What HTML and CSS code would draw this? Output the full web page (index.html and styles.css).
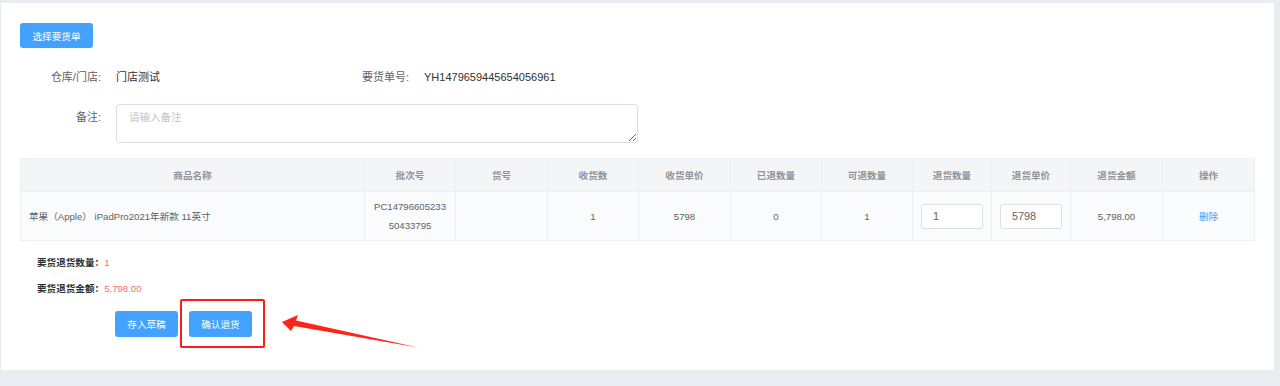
FILE: index.html
```html
<!DOCTYPE html>
<html lang="zh-CN">
<head>
  <meta charset="UTF-8" />
  <title>要货退货</title>
  <link rel="stylesheet" href="styles.css">
</head>
<body>
  <div class="card">
    <button class="btn btn-select">选择要货单</button>

    <div class="info-row">
      <div class="form-item">
        <span class="label">仓库/门店:</span>
        <span class="value">门店测试</span>
      </div>
      <div class="form-item">
        <span class="label">要货单号:</span>
        <span class="value">YH1479659445654056961</span>
      </div>
    </div>

    <div class="remark-row">
      <span class="label">备注:</span>
      <textarea class="remark" placeholder="请输入备注"></textarea>
    </div>

    <table class="goods">
      <colgroup>
        <col style="width:344px"><col style="width:91px"><col style="width:92px"><col style="width:91px">
        <col style="width:92px"><col style="width:91px"><col style="width:91px"><col style="width:79px">
        <col style="width:79px"><col style="width:92px"><col style="width:92px">
      </colgroup>
      <thead>
        <tr>
          <th>商品名称</th><th>批次号</th><th>货号</th><th>收货数</th><th>收货单价</th><th>已退数量</th>
          <th>可退数量</th><th>退货数量</th><th>退货单价</th><th>退货金额</th><th>操作</th>
        </tr>
      </thead>
      <tbody>
        <tr>
          <td class="name">苹果（Apple） iPadPro2021年新款 11英寸</td>
          <td>PC14796605233<br>50433795</td>
          <td></td>
          <td>1</td>
          <td>5798</td>
          <td>0</td>
          <td>1</td>
          <td><input class="cell-input" value="1"></td>
          <td><input class="cell-input" value="5798"></td>
          <td>5,798.00</td>
          <td><a class="link" href="#">删除</a></td>
        </tr>
      </tbody>
    </table>

    <div class="summary">
      <div class="sum-line"><span class="sum-label">要货退货数量：</span><span class="sum-value">1</span></div>
      <div class="sum-line"><span class="sum-label">要货退货金额：</span><span class="sum-value">5,798.00</span></div>
    </div>

    <div class="actions">
      <button class="btn">存入草稿</button>
      <button class="btn">确认退货</button>
    </div>

    <div class="highlight"></div>
    <svg class="arrow" width="155" height="45" viewBox="0 0 155 45">
      <polygon points="12,12 28,5 26,10.5 148,37.5 24,16 21,21" fill="#ff2318" />
    </svg>
  </div>
</body>
</html>
```

FILE: styles.css
```css
body {
  margin: 0;
  padding: 3px 6px 0 1px;
  background: #e9edf2;
  font-family: "Liberation Sans", "Noto Sans CJK SC", sans-serif;
  height: 383px;
}
.card {
  position: relative;
  background: #fff;
  width: 1273px;
  height: 367px;
  box-sizing: border-box;
  padding: 20px 0 0 19px;
}
.btn {
  display: block;
  height: 26px;
  width: 63px;
  padding: 0;
  border: none;
  border-radius: 3px;
  background: #44a2ff;
  color: #fff;
  font-family: inherit;
  font-size: 9.6px;
  cursor: pointer;
}
.btn-select {
  width: 73px;
  height: 25px;
}
.info-row {
  display: grid;
  grid-template-columns: 308px auto;
  margin-top: 19px;
  line-height: 20px;
}
.form-item {
  display: flex;
}
.label {
  width: 81px;
  text-align: right;
  color: #606266;
  font-size: 11px;
  flex-shrink: 0;
}
.value {
  margin-left: 15px;
  color: #303133;
  font-size: 11px;
}
.remark-row {
  display: flex;
  align-items: flex-start;
  margin-top: 17px;
  line-height: 20px;
}
.remark-row .label {
  margin-top: 3px;
}
.remark {
  margin-left: 15px;
  width: 522px;
  height: 39px;
  box-sizing: border-box;
  border: 1px solid #dcdfe6;
  border-radius: 3px;
  padding: 4px 12px;
  font-family: inherit;
  font-size: 10.5px;
  color: #606266;
  resize: vertical;
}
.remark::placeholder {
  color: #c0c4cc;
}
.goods {
  margin-top: 15px;
  table-layout: fixed;
  border-collapse: collapse;
  width: 1234px;
  font-size: 9.6px;
}
.goods th {
  height: 32px;
  background: #f4f5f6;
  color: #909399;
  font-weight: bold;
  border: 1px solid #ebeef5;
  padding: 0;
}
.goods td {
  height: 48px;
  background: #fafbfc;
  color: #606266;
  text-align: center;
  border: 1px solid #ebeef5;
  line-height: 19px;
  padding: 0;
}
.goods td.name {
  text-align: left;
  padding-left: 8px;
}
.cell-input {
  width: 62px;
  height: 25px;
  box-sizing: border-box;
  border: 1px solid #dcdfe6;
  border-radius: 3px;
  padding: 0 11px;
  font-family: inherit;
  font-size: 10.8px;
  color: #606266;
  background: #fff;
  display: block;
  margin: 0 auto;
}
.link {
  color: #409eff;
  text-decoration: none;
}
.summary {
  margin-top: 12px;
  padding-left: 17px;
  font-size: 9.6px;
  line-height: 20px;
}
.sum-line + .sum-line {
  margin-top: 6px;
}
.sum-label {
  color: #303133;
  font-weight: bold;
}
.sum-value {
  color: #f56c6c;
}
.actions {
  display: flex;
  gap: 11px;
  margin-top: 12px;
  padding-left: 95px;
}
.highlight {
  position: absolute;
  left: 179px;
  top: 296px;
  width: 85px;
  height: 49px;
  box-sizing: border-box;
  border: 2px solid #ff1a1a;
  border-radius: 2px;
}
.arrow {
  position: absolute;
  left: 269px;
  top: 307px;
}
```
